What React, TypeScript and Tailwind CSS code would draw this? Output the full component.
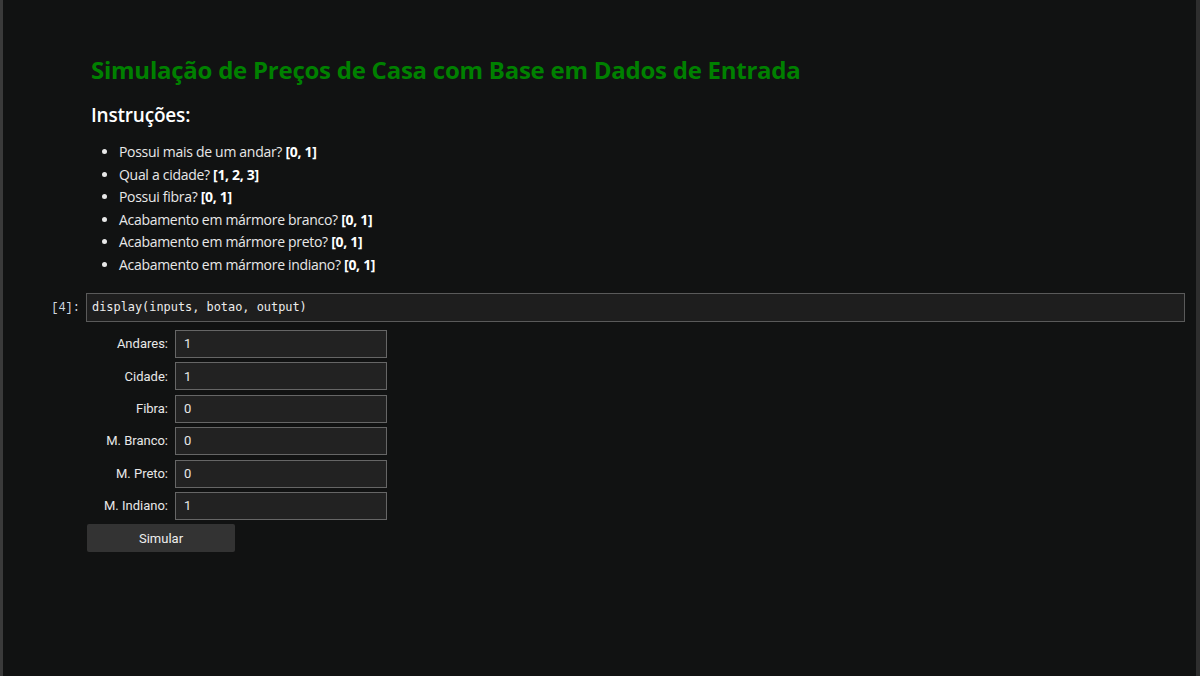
import React from "react";

const instrucoes = [
  { q: "Possui mais de um andar?", r: "[0, 1]" },
  { q: "Qual a cidade?", r: "[1, 2, 3]" },
  { q: "Possui fibra?", r: "[0, 1]" },
  { q: "Acabamento em mármore branco?", r: "[0, 1]" },
  { q: "Acabamento em mármore preto?", r: "[0, 1]" },
  { q: "Acabamento em mármore indiano?", r: "[0, 1]" },
];

const campos = [
  { label: "Andares:", valor: "1" },
  { label: "Cidade:", valor: "1" },
  { label: "Fibra:", valor: "0" },
  { label: "M. Branco:", valor: "0" },
  { label: "M. Preto:", valor: "0" },
  { label: "M. Indiano:", valor: "1" },
];

export default function App() {
  return (
    <div className="flex h-[676px] w-[1200px] overflow-hidden bg-[#111212]">
      <div className="w-[3px] shrink-0 bg-[#3a3a3a]" />
      <div className="flex-1 pt-[55px]">
        {/* markdown */}
        <div className="pl-[88px] font-['Open_Sans',sans-serif]">
          <h1 className="text-[24px] font-bold leading-[30px] tracking-[-0.25px] text-[#008000]">
            Simulação de Preços de Casa com Base em Dados de Entrada
          </h1>
          <h2 className="mt-[17px] text-[19px] font-semibold leading-[26px] tracking-[-0.2px] text-white">
            Instruções:
          </h2>
          <ul className="mt-[13px] list-disc pl-[28px] text-[14px] leading-[22.5px] tracking-[-0.3px] text-[#e8e8e8]">
            {instrucoes.map((i) => (
              <li key={i.q}>
                {i.q} <strong className="font-bold text-white">{i.r}</strong>
              </li>
            ))}
          </ul>
        </div>

        {/* code cell */}
        <div className="mt-[17px] flex items-center pr-[11px]">
          <div className="w-[83px] shrink-0 pr-[6px] text-right font-['Liberation_Mono',monospace] text-[12px] text-[#d0d8e0]">
            [4]:
          </div>
          <div className="flex h-[29px] flex-1 items-center border border-[#5a5a5a] bg-[#1e1e1e] px-[5px] font-['DejaVu_Sans_Mono',monospace] text-[11.9px] text-[#ececec]">
            display(inputs, botao, output)
          </div>
        </div>

        {/* widgets */}
        <div className="mt-[8px] flex flex-col gap-[4.4px] pl-[84px] font-['Roboto',sans-serif] text-[13px] text-[#e8e8e8]">
          {campos.map((c) => (
            <div key={c.label} className="flex items-center">
              <div className="w-[88px] pr-[7px] text-right">{c.label}</div>
              <div className="flex h-[28px] w-[212px] items-center border border-[#666] bg-[#222] px-[8px]">
                {c.valor}
              </div>
            </div>
          ))}
          <button className="h-[28px] w-[148px] rounded-[2px] bg-[#333] text-[13px] text-[#eee]">
            Simular
          </button>
        </div>
      </div>
      <div className="w-[4px] shrink-0 bg-[#2e2e2e]" />
    </div>
  );
}
